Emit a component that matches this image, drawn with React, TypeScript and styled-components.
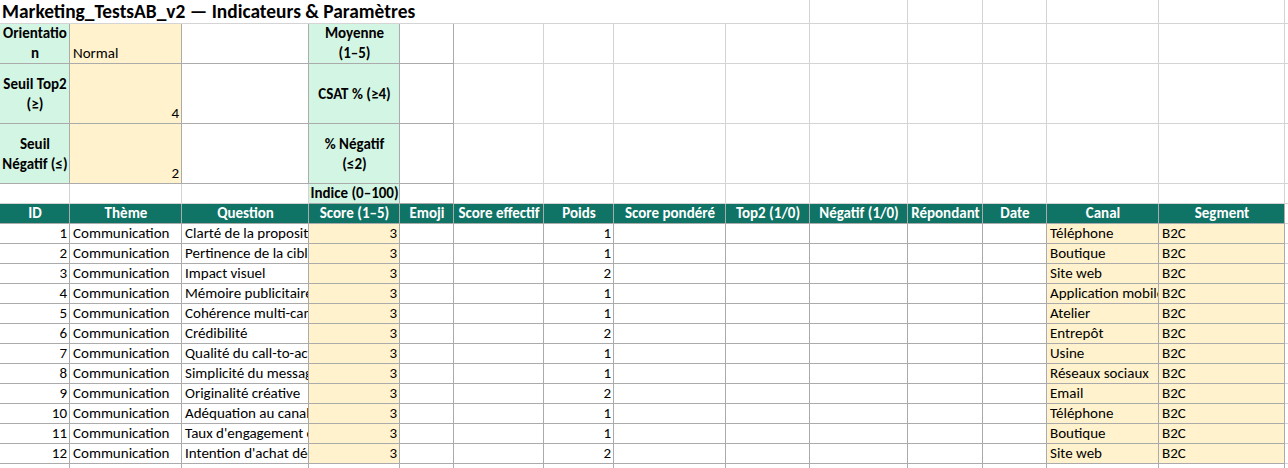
import React from 'react'
import styled, { createGlobalStyle } from 'styled-components'

const GlobalStyle = createGlobalStyle`
  html, body {
    margin: 0;
    padding: 0;
    background: #ffffff;
    overflow: hidden;
  }
  body {
    font-family: Carlito, Calibri, Lato, 'Open Sans', sans-serif;
    font-size: 15px;
    color: #000000;
  }
`

const COLS = [70, 112, 127, 91, 54, 90, 70, 112, 84, 98, 75, 64, 112, 126]
const ROWS = [24, 40, 60, 60, 20, 20]

const Sheet = styled.div`
  display: grid;
  grid-template-columns: ${COLS.map((c) => `${c}px`).join(' ')} 1fr;
  grid-template-rows: ${ROWS.map((r) => `${r}px`).join(' ')};
  grid-auto-rows: 20px;
  width: 1288px;
`

type Fill = 'none' | 'green' | 'yellow' | 'teal'
type Edge = 'light' | 'dark'

const fills: Record<Fill, string> = {
  none: '#ffffff',
  green: '#d3f6e4',
  yellow: '#fff2cc',
  teal: '#0f7366',
}

const Cell = styled.div<{
  $fill?: Fill
  $edge?: Edge
  $h?: 'left' | 'right' | 'center'
  $v?: 'end' | 'center'
  $bold?: boolean
  $span?: number
}>`
  box-sizing: border-box;
  display: flex;
  flex-direction: column;
  justify-content: ${(p) => (p.$v === 'center' ? 'center' : 'flex-end')};
  align-items: ${(p) => (p.$h === 'right' ? 'flex-end' : p.$h === 'center' ? 'center' : 'flex-start')};
  padding: 0 2px 0 3px;
  background: ${(p) => fills[p.$fill || 'none']};
  border-right: 1px solid ${(p) => (p.$edge === 'dark' ? '#ababab' : '#d4d4d4')};
  border-bottom: 1px solid ${(p) => (p.$edge === 'dark' ? '#ababab' : '#d4d4d4')};
  color: ${(p) => (p.$fill === 'teal' ? '#ffffff' : '#000000')};
  font-weight: ${(p) => (p.$bold ? 700 : 400)};
  grid-column: span ${(p) => p.$span || 1};
  overflow: hidden;
  white-space: nowrap;
  line-height: 20px;
  text-align: ${(p) => p.$h || 'left'};
`

const Title = styled(Cell)`
  font-size: 19.4px;
  font-weight: 700;
  line-height: 23px;
  padding-left: 2px;
  border-right: none;
`

const rows = [
  ['Clarté de la proposition de valeur', 'Téléphone', 1],
  ['Pertinence de la cible', 'Boutique', 1],
  ['Impact visuel', 'Site web', 2],
  ['Mémoire publicitaire', 'Application mobile', 1],
  ['Cohérence multi-canal', 'Atelier', 1],
  ['Crédibilité', 'Entrepôt', 2],
  ['Qualité du call-to-action', 'Usine', 1],
  ['Simplicité du message', 'Réseaux sociaux', 1],
  ['Originalité créative', 'Email', 2],
  ['Adéquation au canal', 'Téléphone', 1],
  ["Taux d'engagement estimé", 'Boutique', 1],
  ["Intention d'achat déclarée", 'Site web', 2],
] as const

const headers = [
  'ID', 'Thème', 'Question', 'Score (1–5)', 'Emoji', 'Score effectif', 'Poids',
  'Score pondéré', 'Top2 (1/0)', 'Négatif (1/0)', 'Répondant', 'Date', 'Canal', 'Segment',
]

const Blank = ({ n, edge }: { n: number; edge?: Edge }) => (
  <>
    {Array.from({ length: n }).map((_, i) => (
      <Cell key={i} $edge={edge} />
    ))}
  </>
)

export default function App() {
  return (
    <>
      <GlobalStyle />
      <Sheet>
        {/* title row */}
        <Title $span={8} $v="end">Marketing_TestsAB_v2 — Indicateurs &amp; Paramètres</Title>
        <Blank n={7} />

        {/* parameters block */}
        <Cell $fill="green" $edge="dark" $bold $h="center" $v="end">Orientatio<br />n</Cell>
        <Cell $fill="yellow" $edge="dark">Normal</Cell>
        <Cell $edge="dark" />
        <Cell $fill="green" $edge="dark" $bold $h="center" $v="end">Moyenne<br />(1–5)</Cell>
        <Cell $edge="dark" />
        <Blank n={10} />

        <Cell $fill="green" $edge="dark" $bold $h="center" $v="center">Seuil Top2<br />(≥)</Cell>
        <Cell $fill="yellow" $edge="dark" $h="right">4</Cell>
        <Cell $edge="dark" />
        <Cell $fill="green" $edge="dark" $bold $h="center" $v="center">CSAT % (≥4)</Cell>
        <Cell $edge="dark" />
        <Blank n={10} />

        <Cell $fill="green" $edge="dark" $bold $h="center" $v="center">Seuil<br />Négatif (≤)</Cell>
        <Cell $fill="yellow" $edge="dark" $h="right">2</Cell>
        <Cell $edge="dark" />
        <Cell $fill="green" $edge="dark" $bold $h="center" $v="center">% Négatif<br />(≤2)</Cell>
        <Cell $edge="dark" />
        <Blank n={10} />

        <Blank n={3} />
        <Cell $fill="green" $edge="dark" $bold $h="center">Indice (0–100)</Cell>
        <Cell $edge="dark" />
        <Blank n={10} />

        {/* table header */}
        {headers.map((h) => (
          <Cell key={h} $fill="teal" $edge="dark" $bold $h="center">{h}</Cell>
        ))}
        <Cell />

        {/* data rows */}
        {rows.map(([q, canal, poids], i) => (
          <React.Fragment key={i}>
            <Cell $edge="dark" $h="right">{i + 1}</Cell>
            <Cell $edge="dark">Communication</Cell>
            <Cell $edge="dark">{q}</Cell>
            <Cell $fill="yellow" $edge="dark" $h="right">3</Cell>
            <Cell $edge="dark" />
            <Cell $edge="dark" />
            <Cell $edge="dark" $h="right">{poids}</Cell>
            <Blank n={5} edge="dark" />
            <Cell $fill="yellow" $edge="dark">{canal}</Cell>
            <Cell $fill="yellow" $edge="dark">B2C</Cell>
            <Cell />
          </React.Fragment>
        ))}
        <Blank n={14} edge="dark" />
        <Cell />
      </Sheet>
    </>
  )
}
